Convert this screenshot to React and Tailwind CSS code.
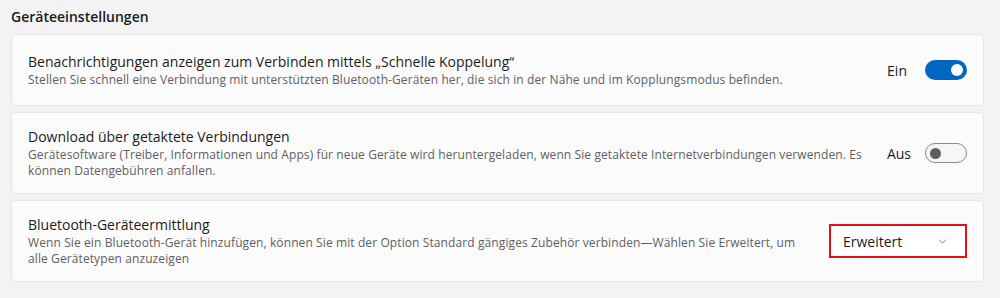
import { ChevronDown } from 'lucide-react'

function Toggle({ on }) {
  return on ? (
    <div className="w-[42px] h-[20px] rounded-full bg-[#0067c0] flex items-center justify-end pr-[4px]">
      <div className="w-[12px] h-[12px] rounded-full bg-white" />
    </div>
  ) : (
    <div className="w-[42px] h-[20px] rounded-full border border-[#8a8a8a] bg-[#f6f6f6] flex items-center pl-[4px]">
      <div className="w-[11px] h-[11px] rounded-full bg-[#5d5d5d]" />
    </div>
  )
}

function Row({ title, children, control, height }) {
  return (
    <div className={`${height} flex items-center justify-between bg-[#fbfbfb] border border-[#e5e5e5] rounded-[4px] pl-[16px] pr-[16px]`}>
      <div className="flex flex-col">
        <div className="text-[14px] leading-[20px] text-[#1b1b1b]">{title}</div>
        <div className="text-[12px] leading-[16px] text-[#5f5f5f] tracking-[0.1px]">{children}</div>
      </div>
      {control}
    </div>
  )
}

export default function App() {
  return (
    <div
      className="w-[1000px] h-[298px] bg-[#f3f3f3] px-[11px] pt-[7px]"
      style={{ fontFamily: '"Open Sans", "Noto Sans", sans-serif' }}
    >
      <h2 className="text-[14px] leading-[20px] font-semibold text-[#1b1b1b] mb-[7px]">
        Geräteeinstellungen
      </h2>

      <div className="w-[973px] flex flex-col gap-[6px]">
        <Row
          height="h-[72px]"
          title="Benachrichtigungen anzeigen zum Verbinden mittels „Schnelle Koppelung“"
          control={
            <div className="flex items-center gap-[18px]">
              <span className="text-[14px] text-[#1b1b1b]">Ein</span>
              <Toggle on />
            </div>
          }
        >
          Stellen Sie schnell eine Verbindung mit unterstützten Bluetooth-Geräten her, die sich in der Nähe und im Kopplungsmodus befinden.
        </Row>

        <Row
          height="h-[82px]"
          title="Download über getaktete Verbindungen"
          control={
            <div className="flex items-center gap-[14px]">
              <span className="text-[14px] text-[#1b1b1b]">Aus</span>
              <Toggle />
            </div>
          }
        >
          Gerätesoftware (Treiber, Informationen und Apps) für neue Geräte wird heruntergeladen, wenn Sie getaktete Internetverbindungen verwenden. Es
          <br />
          können Datengebühren anfallen.
        </Row>

        <Row
          height="h-[82px]"
          title="Bluetooth-Geräteermittlung"
          control={
            <div className="w-[138px] h-[34px] border-2 border-[#e3101a] bg-white flex items-center justify-between pl-[12px] pr-[16px]">
              <span className="text-[14px] text-[#1b1b1b]">Erweitert</span>
              <ChevronDown size={13} strokeWidth={1.5} className="text-[#5f5f5f]" />
            </div>
          }
        >
          Wenn Sie ein Bluetooth-Gerät hinzufügen, können Sie mit der Option Standard gängiges Zubehör verbinden—Wählen Sie Erweitert, um
          <br />
          alle Gerätetypen anzuzeigen
        </Row>
      </div>
    </div>
  )
}
